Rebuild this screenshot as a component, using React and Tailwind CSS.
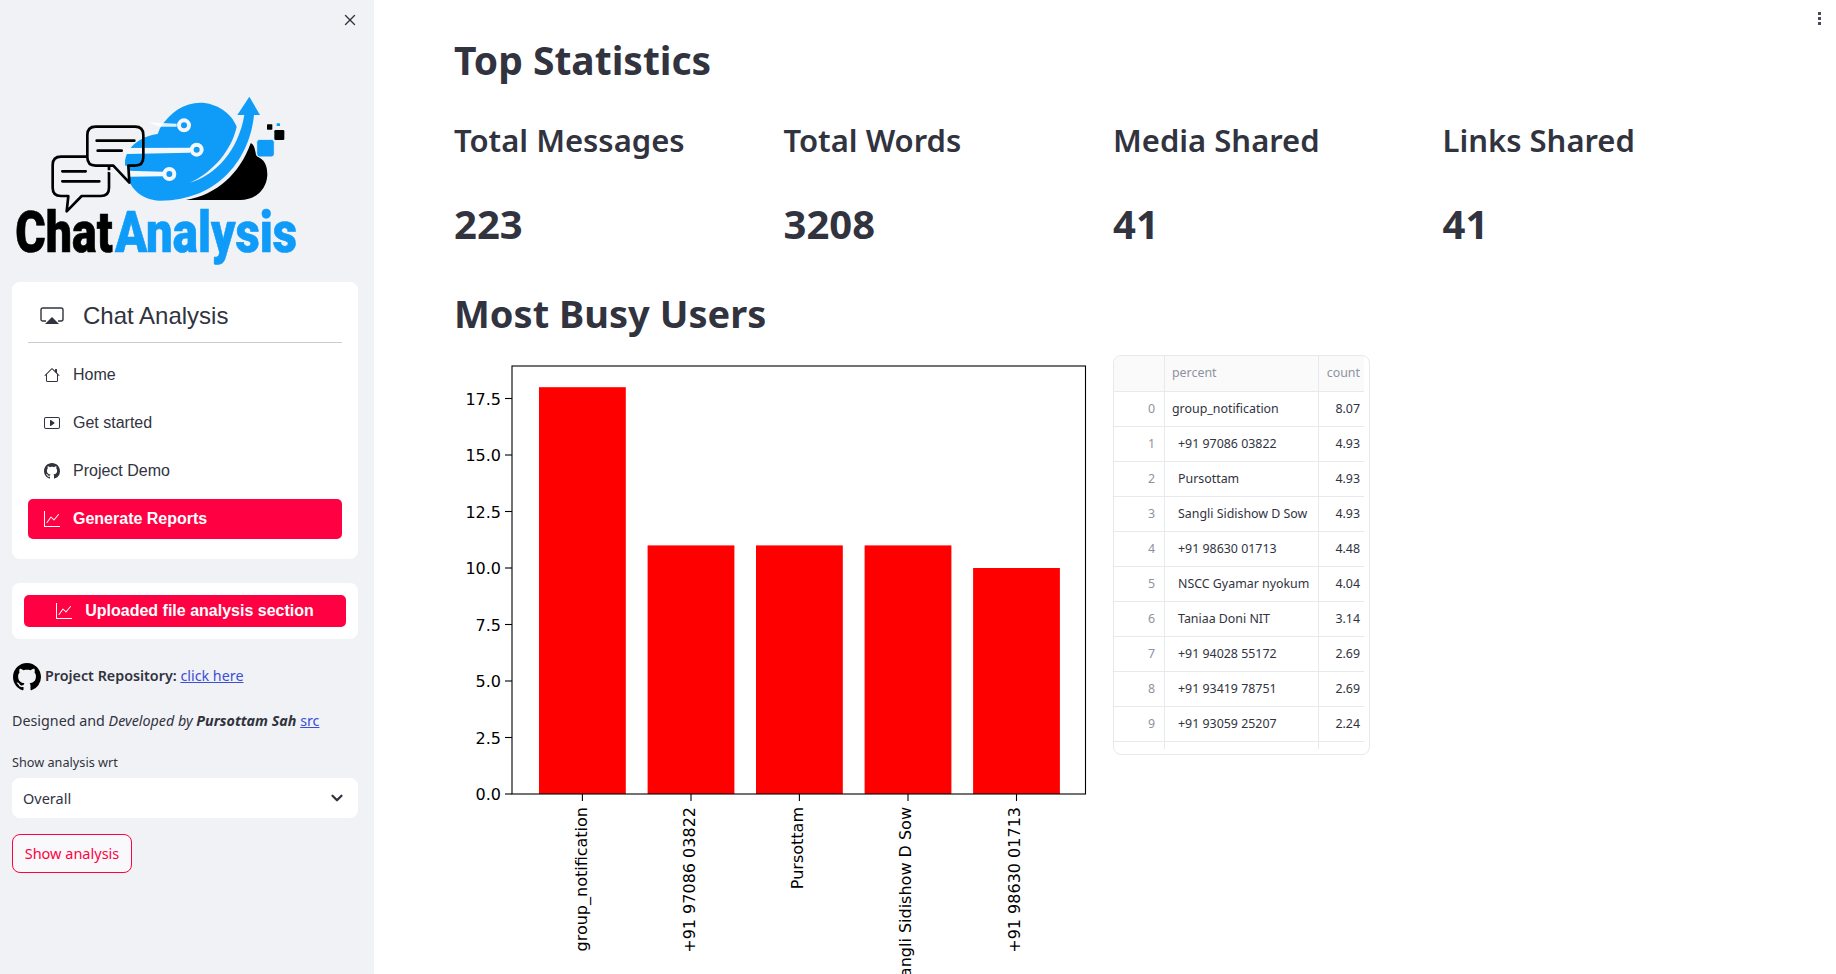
import React from "react";
import { BsHouse, BsPlayBtn, BsGithub, BsGraphUp } from "react-icons/bs";
import { X, ChevronDown } from "lucide-react";

const sans = "font-['Noto_Sans',sans-serif]";
const arial = "font-['Liberation_Sans',Arial,sans-serif]";

const metrics = [
	{ label: "Total Messages", value: "223" },
	{ label: "Total Words", value: "3208" },
	{ label: "Media Shared", value: "41" },
	{ label: "Links Shared", value: "41" },
];

const rows = [
	{ name: "group_notification", count: "8.07" },
	{ name: "+91 97086 03822", count: "4.93", indent: true },
	{ name: "Pursottam", count: "4.93", indent: true },
	{ name: "Sangli Sidishow D Sow", count: "4.93", indent: true },
	{ name: "+91 98630 01713", count: "4.48", indent: true },
	{ name: "NSCC Gyamar nyokum", count: "4.04", indent: true },
	{ name: "Taniaa Doni NIT", count: "3.14", indent: true },
	{ name: "+91 94028 55172", count: "2.69", indent: true },
	{ name: "+91 93419 78751", count: "2.69", indent: true },
	{ name: "+91 93059 25207", count: "2.24", indent: true },
];

const bars = [
	{ label: "group_notification", x: 582.4, labelX: 587.4, value: 18 },
	{ label: "+91 97086 03822", x: 691, labelX: 695, value: 11 },
	{ label: "Pursottam", x: 799.4, labelX: 803, value: 11 },
	{ label: "Sangli Sidishow D Sow", x: 908, labelX: 911, value: 11 },
	{ label: "+91 98630 01713", x: 1016.5, labelX: 1020, value: 10 },
];

const yTicks = ["0.0", "2.5", "5.0", "7.5", "10.0", "12.5", "15.0", "17.5"];

const Logo = () => {
	const bg = "#f0f2f6";
	const blue = "#0f9bf8";
	return (
		<svg viewBox="0 270 1122 540" className="block w-[374px] h-[180px] -ml-3">
			{/* lower bubble */}
			<path d="M183 470H302Q327 470 327 495V563Q327 588 302 588H245L200 634L205 588H183Q158 588 158 563V495Q158 470 183 470Z" fill={bg} stroke="#000" strokeWidth="8" strokeLinejoin="round" />
			<path d="M187 514H257M187 544H298" stroke="#000" strokeWidth="8" strokeLinecap="round" />
			<rect x="262" y="380" width="168" height="120" rx="25" fill={bg} />
			{/* blue blob and arrow */}
			<path d="M375 490C375 445 420 408 473 402L480 385C510 335 555 308 600 308C650 308 695 340 710 380C695 450 640 515 570 548C650 525 715 450 733 345H712L748 290L780 345H762C750 470 660 602 480 602C420 602 375 555 375 490Z" fill={blue} />
			<path d="M558 600C650 585 720 520 752 430C760 430 765 445 768 465L785 478C800 490 802 510 802 525C800 570 765 600 720 600Z" fill="#000" />
			<rect x="770" y="418" width="53" height="53" rx="9" fill={blue} stroke={bg} strokeWidth="3" />
			<rect x="823" y="390" width="30" height="30" rx="4" fill="#000" />
			<rect x="801" y="373" width="16" height="16" rx="2" fill="#000" />
			<rect x="830" y="370" width="10" height="8" rx="1" fill={blue} />
			{/* circuit lines */}
			<path d="M445 367L530 371V380H480Z" fill="#fff" opacity="0.85" />
			<circle cx="552" cy="376" r="15" fill={blue} stroke="#f4f7fb" strokeWidth="12" />
			<path d="M355 444L570 443V458L380 462Z" fill="#f4f7fb" />
			<circle cx="590" cy="449" r="15" fill={blue} stroke="#f4f7fb" strokeWidth="12" />
			<path d="M300 510L490 515V529L390 530Z" fill="#f4f7fb" />
			<circle cx="508" cy="522" r="15" fill={blue} stroke="#f4f7fb" strokeWidth="12" />
			{/* upper bubble */}
			<path d="M340 497L388 548L385 497Z" fill={bg} />
			<path d="M340 497H287Q262 497 262 472V405Q262 380 287 380H405Q430 380 430 405V472Q430 497 405 497H385L388 548Z" fill="none" stroke="#000" strokeWidth="8" strokeLinejoin="round" />
			<path d="M290 422H403M293 452H365" stroke="#000" strokeWidth="8" strokeLinecap="round" />
			{/* wordmark */}
			<text transform="translate(46 755) scale(0.81 1)" fontFamily="Roboto, sans-serif" fontWeight="900" fontSize="172" fill="#000" stroke="#000" strokeWidth="2">Chat</text>
			<text transform="translate(345 755) scale(0.825 1)" fontFamily="Roboto, sans-serif" fontWeight="900" fontSize="172" fill={blue} stroke={blue} strokeWidth="2">Analysis</text>
		</svg>
	);
};

const AirplayIcon = () => (
	<svg viewBox="0 0 24 18" className="w-6 h-[18px]" fill="none">
		<path d="M6 14H3Q1 14 1 12V3Q1 1 3 1H21Q23 1 23 3V12Q23 14 21 14H18" stroke="#31333f" strokeWidth="1.4" />
		<path d="M12 10L19 17H5Z" fill="#31333f" />
	</svg>
);

const NavItem = ({ icon, label }) => (
	<div className="flex items-center gap-[13px] h-10 pl-4 text-base text-[#31333f]">
		{icon}
		<span>{label}</span>
	</div>
);

const Sidebar = () => (
	<aside className="w-[374px] shrink-0 h-full bg-[#f0f2f6] pl-3 pr-4 flex flex-col">
		<div className="h-10 flex items-center justify-end -mr-px text-[#31333f]">
			<X size={18} strokeWidth={1.8} />
		</div>
		<div className="mt-[50px]">
			<Logo />
		</div>

		<div className={`mt-3 bg-white rounded-lg px-4 pt-[7px] pb-5 ${arial}`}>
			<div className="h-[54px] flex items-center gap-[19px] pl-3 border-b border-[#cccccc] text-2xl text-[#31333f]">
				<AirplayIcon />
				<span>Chat Analysis</span>
			</div>
			<div className="mt-3 flex flex-col gap-2">
				<NavItem icon={<BsHouse size={16} />} label="Home" />
				<NavItem icon={<BsPlayBtn size={16} />} label="Get started" />
				<NavItem icon={<BsGithub size={16} />} label="Project Demo" />
				<div className="flex items-center gap-[13px] h-10 pl-4 rounded-[5px] bg-[#ff0042] text-white text-base font-bold">
					<BsGraphUp size={16} />
					<span>Generate Reports</span>
				</div>
			</div>
		</div>

		<div className={`mt-6 bg-white rounded-lg p-3 ${arial}`}>
			<div className="h-8 rounded-[5px] bg-[#ff0042] text-white text-base font-bold flex items-center justify-center gap-[13px]">
				<BsGraphUp size={16} />
				<span>Uploaded file analysis section</span>
			</div>
		</div>

		<div className={`mt-6 flex items-center gap-1 h-7 text-[14.3px] text-[#31333f] ${sans}`}>
			<BsGithub size={28} className="ml-px text-black" />
			<span className="-mt-[3px]">
				<span className="font-semibold">Project Repository:</span> <a className="underline text-[#3b4fd8]">click here</a>
			</span>
		</div>
		<p className={`mt-[18px] text-[14.3px] leading-6 text-[#31333f] ${sans}`}>
			Designed and <i>Developed by</i> <b><i>Pursottam Sah</i></b> <a className="underline text-[#3b4fd8]">src</a>
		</p>
		<label className={`mt-[19px] text-[12.7px] leading-5 text-[#31333f] ${sans}`}>Show analysis wrt</label>
		<div className={`mt-[6px] h-10 rounded-lg bg-white flex items-center justify-between pl-[11px] pr-3 text-[14.5px] text-[#31333f] ${sans}`}>
			<span className="pt-0.5">Overall</span>
			<ChevronDown size={18} strokeWidth={3} />
		</div>
		<div className={`mt-4 self-start w-[120px] h-[39px] rounded-lg border border-[#ff0042] bg-[#f9f9fb] flex items-center justify-center text-[14.5px] text-[#ff0042] ${sans}`}>
			Show analysis
		</div>
	</aside>
);

const BarChart = () => (
	<svg viewBox="455 350 650 650" className="block w-[650px] h-[650px] ml-px" fontFamily="'DejaVu Sans', sans-serif">
		<rect x="512" y="366" width="573.5" height="428" fill="#fff" />
		{bars.map((b) => (
			<rect key={b.x} x={b.x - 43.4} y={794 - b.value * 22.6} width="86.8" height={b.value * 22.6} fill="#ff0000" />
		))}
		<rect x="512" y="366" width="573.5" height="428" fill="none" stroke="#000" strokeWidth="1.1" />
		{yTicks.map((t, i) => (
			<g key={t}>
				<line x1="505" x2="512" y1={794 - i * 56.5} y2={794 - i * 56.5} stroke="#000" strokeWidth="1.1" />
				<text x="501" y={794 - i * 56.5 + 6} textAnchor="end" fontSize="16" fill="#000">{t}</text>
			</g>
		))}
		{bars.map((b) => (
			<g key={b.label}>
				<line x1={b.x} x2={b.x} y1="794" y2="801" stroke="#000" strokeWidth="1.1" />
				<text transform={`translate(${b.labelX} 807) rotate(-90)`} textAnchor="end" fontSize="16" fill="#000">{b.label}</text>
			</g>
		))}
	</svg>
);

const DataTable = () => (
	<div className={`w-[257px] h-[400px] mt-[5px] rounded-lg border border-[#e8e9ed] overflow-hidden text-[12.4px] text-[#31333f] ${sans}`}>
		<div className="flex h-[36px] w-[250px] bg-[#fafafa] border-b border-[#e8e9ed] text-[#8f92a1]">
			<div className="w-[51px] border-r border-[#e8e9ed]"></div>
			<div className="w-[154px] border-r border-[#e8e9ed] flex items-center pl-[7px]">percent</div>
			<div className="flex-1 flex items-center justify-end pr-1">count</div>
		</div>
		{rows.map((r, i) => (
			<div key={i} className="flex h-[35px] w-[250px] border-b border-[#e8e9ed]">
				<div className="w-[51px] border-r border-[#e8e9ed] flex items-center justify-end pr-[9px] text-[#8f92a1]">{i}</div>
				<div className={`w-[154px] border-r border-[#e8e9ed] flex items-center whitespace-nowrap ${r.indent ? "pl-[13px]" : "pl-[7px]"}`}>{r.name}</div>
				<div className="flex-1 flex items-center justify-end pr-1">{r.count}</div>
			</div>
		))}
		<div className="flex h-[7px] w-[250px]">
			<div className="w-[51px] border-r border-[#e8e9ed]"></div>
			<div className="w-[154px] border-r border-[#e8e9ed]"></div>
		</div>
	</div>
);

const App = () => {
	return (
		<div className="w-[1836px] h-[974px] overflow-hidden flex bg-white">
			<Sidebar />
			<main className={`relative flex-1 pl-20 pt-[34px] text-[#31333f] ${sans}`}>
				<div className="absolute top-[12px] right-[15px] flex flex-col gap-[2px]">
					<span className="w-[3px] h-[3px] bg-[#4a4a5a]"></span>
					<span className="w-[3px] h-[3px] bg-[#4a4a5a]"></span>
					<span className="w-[3px] h-[3px] bg-[#4a4a5a]"></span>
				</div>
				<h1 className="text-[39px] leading-[52px] font-bold">Top Statistics</h1>
				<div className="mt-8 grid grid-cols-[329.5px_329.5px_329.5px_329.5px]">
					{metrics.map((m) => (
						<div key={m.label}>
							<div className="text-[31px] leading-[44px] font-semibold">{m.label}</div>
							<div className="mt-10 text-[40px] leading-[44px] font-bold">{m.value}</div>
						</div>
					))}
				</div>
				<h1 className="mt-[41px] text-[38px] leading-[52px] font-bold">Most Busy Users</h1>
				<div className="flex mt-[11px]">
					<div className="w-[659px] shrink-0">
						<BarChart />
					</div>
					<DataTable />
				</div>
			</main>
		</div>
	);
};

export default App;
